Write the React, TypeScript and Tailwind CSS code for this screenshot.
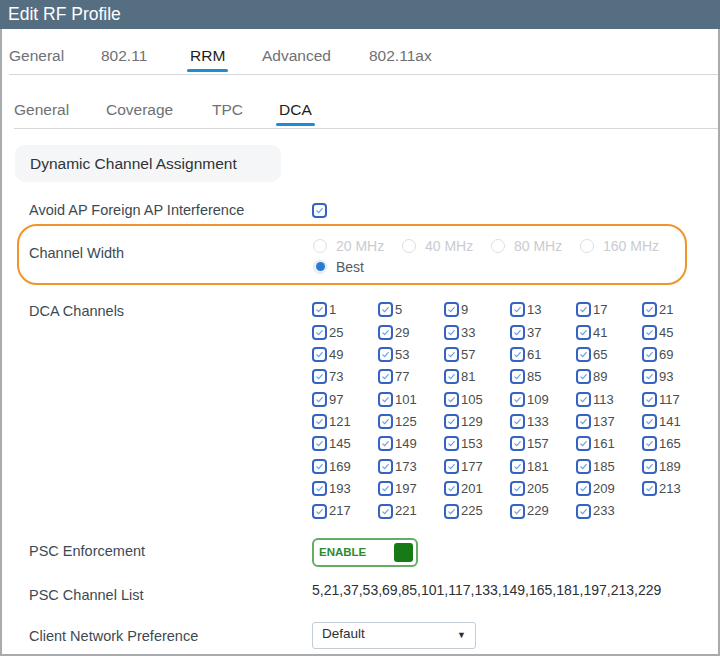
import React from "react";

const mainTabs: [string, number][] = [
  ["General", 92],
  ["802.11", 89],
  ["RRM", 72],
  ["Advanced", 107],
  ["802.11ax", 80],
];
const subTabs: [string, number][] = [
  ["General", 92],
  ["Coverage", 106],
  ["TPC", 67],
  ["DCA", 60],
];
const widths = ["20 MHz", "40 MHz", "80 MHz", "160 MHz"];
const channels = [
  1, 5, 9, 13, 17, 21, 25, 29, 33, 37, 41, 45, 49, 53, 57, 61, 65, 69, 73, 77, 81, 85, 89, 93, 97, 101,
  105, 109, 113, 117, 121, 125, 129, 133, 137, 141, 145, 149, 153, 157, 161, 165, 169, 173, 177, 181,
  185, 189, 193, 197, 201, 205, 209, 213, 217, 221, 225, 229, 233,
];

function Tabs({ items, active, className }: { items: [string, number][]; active: string; className: string }) {
  return (
    <div className={`flex border-b border-[#d5d8db] ${className}`}>
      {items.map(([t, w]) => (
        <div key={t} className="shrink-0 pb-[9px] text-[15.5px] leading-[18px]" style={{ width: w }}>
          <span className={`relative ${t === active ? "text-[#1d1d1d]" : "text-[#6e7175]"}`}>
            {t}
            {t === active && (
              <span className="absolute -left-[3px] -right-[3px] -bottom-[8px] h-[3px] rounded-full bg-[#1e8bd3]" />
            )}
          </span>
        </div>
      ))}
    </div>
  );
}

function Check() {
  return (
    <span className="inline-flex h-[15px] w-[15px] shrink-0 items-center justify-center rounded-[4px] border-2 border-[#3563c2] bg-white">
      <svg width="9" height="9" viewBox="0 0 10 10">
        <path d="M2 5.4 L4.1 7.4 L8 2.8" fill="none" stroke="#6aa0dc" strokeWidth="1.3" strokeLinecap="round" />
      </svg>
    </span>
  );
}

function Radio({ on }: { on?: boolean }) {
  return (
    <span
      className={`inline-flex h-[14px] w-[14px] items-center justify-center rounded-full border ${
        on ? "border-[#dfe6ee] bg-[#eef2f7]" : "border-[#dcdfe2] bg-white"
      }`}
    >
      {on && <span className="h-[9px] w-[9px] rounded-full bg-[#2a7bd0]" />}
    </span>
  );
}

function Label({ children, className = "" }: { children: React.ReactNode; className?: string }) {
  return <div className={`w-[283px] shrink-0 text-[14.5px] text-[#3d4a52] ${className}`}>{children}</div>;
}

export default function App() {
  return (
    <div
      className="h-[656px] w-[720px] overflow-hidden bg-white"
      style={{ fontFamily: '"Liberation Sans", Arial, sans-serif' }}
    >
      <div className="flex h-[29px] items-center bg-[#566e81] pl-[8px] text-[17.5px] text-white">Edit RF Profile</div>
      <div className="h-[627px] border-x-2 border-b-2 border-[#a9acae]">
        <Tabs items={mainTabs} active="RRM" className="ml-[7px] pt-[18px]" />
        <Tabs items={subTabs} active="DCA" className="ml-[12px] mt-[26px]" />

        <div className="ml-[13px] mt-[16px] flex h-[37px] w-[266px] items-center rounded-[10px] bg-[#f5f6f7] pl-[15px] text-[15.5px] text-[#2f3336]">
          Dynamic Channel Assignment
        </div>

        <div className="mt-[18px] flex items-center pl-[27px]">
          <Label>Avoid AP Foreign AP Interference</Label>
          <Check />
        </div>

        <div className="ml-[15px] mt-[2px] flex h-[61px] w-[670px] items-center rounded-[20px] border-2 border-[#f0932b] pl-[10px]">
          <Label className="w-[284px]">Channel Width</Label>
          <div className="flex flex-col gap-[5px] pt-[4px]">
            <div className="flex items-center leading-[16px]">
              {widths.map((w) => (
                <div key={w} className="flex w-[89px] items-center gap-[9px] text-[14px] text-[#c9ccd0]">
                  <Radio />
                  <span>{w}</span>
                </div>
              ))}
            </div>
            <div className="flex items-center gap-[9px] text-[14px] leading-[16px] text-[#555a5f]">
              <Radio on />
              <span>Best</span>
            </div>
          </div>
        </div>

        <div className="mt-[14px] flex pl-[27px]">
          <Label className="pt-[2px]">DCA Channels</Label>
          <div className="grid grid-cols-[repeat(6,66px)] auto-rows-[22.35px]">
            {channels.map((c) => (
              <div key={c} className="flex items-center gap-[2px] text-[13px] text-[#4a4d50]">
                <Check />
                <span>{c}</span>
              </div>
            ))}
          </div>
        </div>

        <div className="mt-[16px] flex items-center pl-[27px]">
          <Label className="-mt-[2px]">PSC Enforcement</Label>
          <div className="flex h-[29px] w-[106px] items-center justify-between rounded-[6px] border-2 border-[#64ad64] pl-[5px] pr-[3px]">
            <span className="text-[11.5px] font-bold text-[#2f8a2f]">ENABLE</span>
            <span className="h-[19px] w-[19px] rounded-[3px] bg-[#177a17]" />
          </div>
        </div>

        <div className="mt-[13px] flex pl-[27px]">
          <Label className="pt-[5px]">PSC Channel List</Label>
          <span className="text-[14px] text-[#2d3033]">5,21,37,53,69,85,101,117,133,149,165,181,197,213,229</span>
        </div>

        <div className="mt-[15px] flex items-center pl-[27px]">
          <Label className="pt-[2px]">Client Network Preference</Label>
          <div className="flex h-[27px] w-[164px] items-center justify-between rounded-[3px] border border-[#c4ccd4] pl-[9px] pr-[9px] text-[13.5px] text-[#2d3033]">
            <span className="-mt-[3px]">Default</span>
            <span className="text-[9px]">▼</span>
          </div>
        </div>
      </div>
    </div>
  );
}
